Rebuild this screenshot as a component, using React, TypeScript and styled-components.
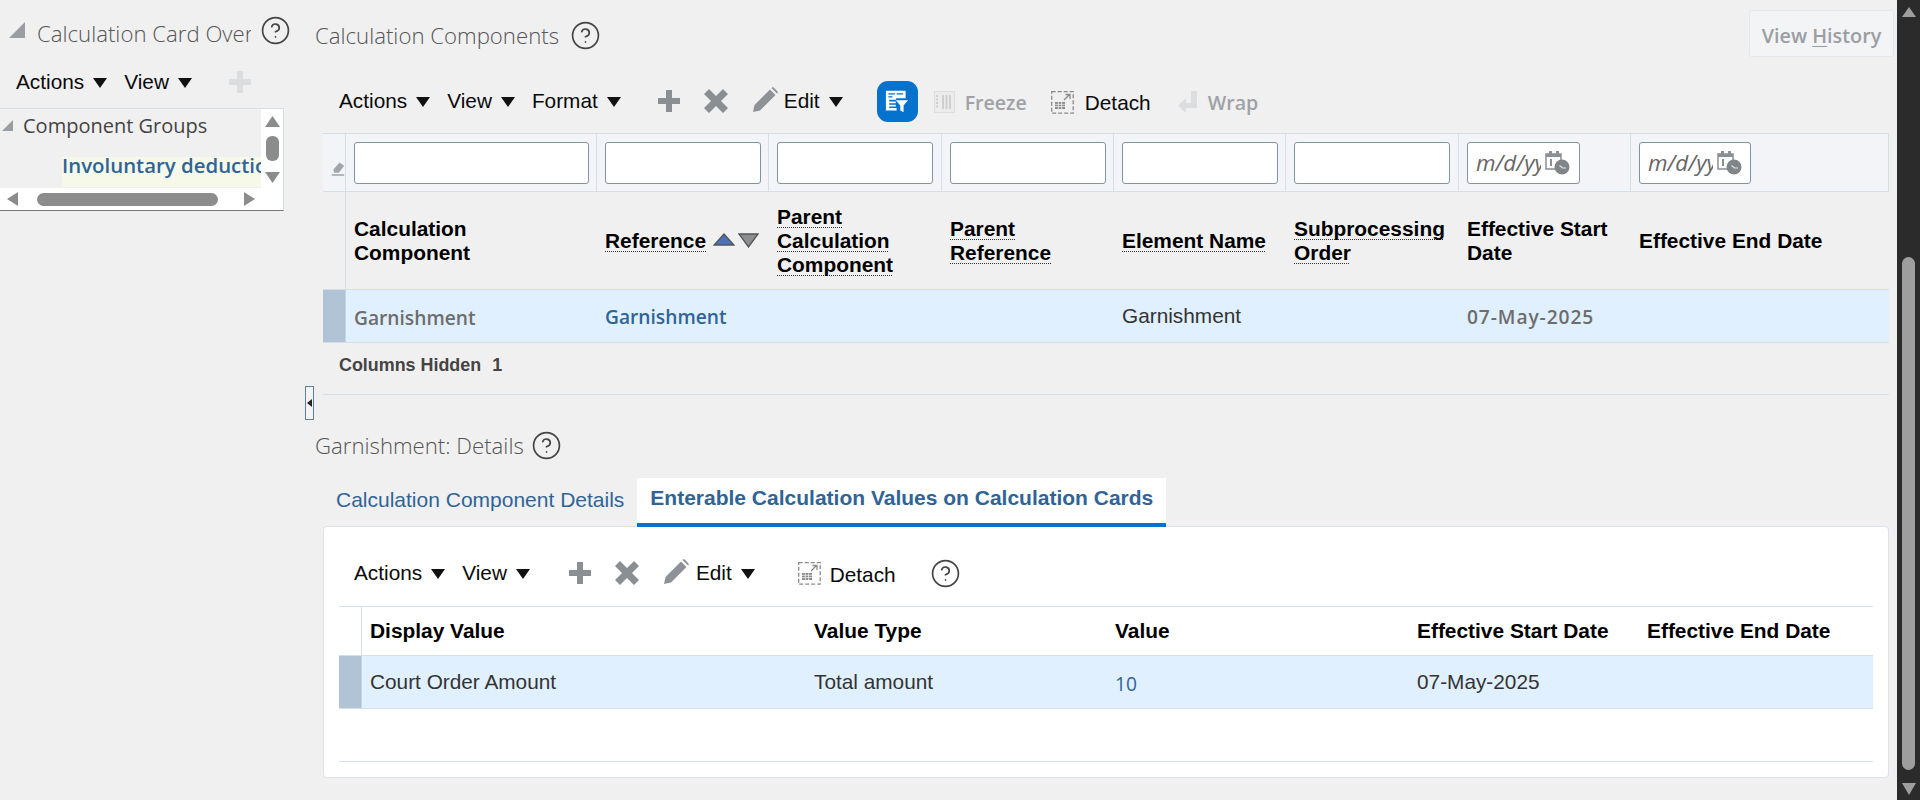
import React from 'react';
import styled, { createGlobalStyle } from 'styled-components';
import { CircleHelp } from 'lucide-react';

const GlobalStyle = createGlobalStyle`
  html, body { margin: 0; padding: 0; background: #f0f0f1; }
  body { font-family: "Liberation Sans", Arial, sans-serif; color: #333; overflow: hidden; }
  * { box-sizing: border-box; }
`;

const MAIN_COLS = '23px 251px 172px 173px 172px 172px 173px 172px 258px';
const SUB_COLS = '23px 444px 301px 302px 230px 234px';

// --- page frame ---
const Page = styled.div`
  position: relative;
  display: flex;
  width: 1920px;
  height: 800px;
  overflow: hidden;
`;

const LeftPane = styled.aside`
  width: 305px;
  flex: none;
`;

const MainPane = styled.main`
  width: 1592px;
  flex: none;
  padding-left: 10px;
`;

const PageScroll = styled.div`
  width: 23px;
  flex: none;
  background: #2b2b2b;
  display: flex;
  flex-direction: column;
  align-items: center;
  padding: 7px 0 5px;
`;

const PageThumb = styled.div`
  width: 13px;
  height: 513px;
  margin-top: 240px;
  background: #9e9e9e;
  border-radius: 7px;
`;

const BottomArrow = styled.div`
  margin-top: auto;
  display: flex;
`;

const SplitterTab = styled.div`
  position: absolute;
  left: 305px;
  top: 386px;
  width: 9px;
  height: 34px;
  border: 1px solid #5f7f98;
  background: #f4f4f4;
  display: flex;
  align-items: center;
  justify-content: center;
`;

// --- left pane ---
const LeftTitleRow = styled.div`
  height: 60px;
  padding-left: 9px;
  display: flex;
  align-items: center;
`;

const SectionTitle = styled.h2<{ $width?: number }>`
  margin: 0;
  font-family: "Open Sans", sans-serif;
  font-weight: 300;
  font-size: 22.2px;
  color: #555;
  white-space: nowrap;
  overflow: hidden;
  ${p => (p.$width ? `width: ${p.$width}px;` : '')}
`;

const HelpIcon = styled(CircleHelp)<{ $ml: number }>`
  margin-left: ${p => p.$ml}px;
  width: 31px;
  height: 31px;
  color: #444;
  flex: none;
`;

const LeftBar = styled.div`
  height: 48px;
  padding: 0 0 4px 16px;
  display: flex;
  align-items: center;
`;

const Tree = styled.div`
  width: 284px;
  height: 103px;
  border-top: 1px solid #d6dfe6;
  border-right: 1px solid #d6dfe6;
  border-bottom: 1px solid #777;
  display: grid;
  grid-template-columns: 261px 22px;
  grid-template-rows: 79px 22px;
`;

const TreeBody = styled.div`
  overflow: hidden;
  white-space: nowrap;
  font-family: "Open Sans", sans-serif;
`;

const TreeRoot = styled.div`
  height: 32px;
  margin-bottom: 16px;
  padding-left: 2px;
  display: flex;
  align-items: center;
  font-size: 20px;
  color: #444;
  gap: 10px;
`;

const TreeLeaf = styled.div`
  margin-left: 62px;
  height: 30px;
  line-height: 17px;
  background: #f6f8e9;
  color: #2f6497;
  font-weight: 600;
  font-size: 20.4px;
  overflow: hidden;
`;

const TreeVScroll = styled.div`
  background: #fff;
  display: flex;
  flex-direction: column;
  align-items: center;
  padding-top: 7px;
`;

const TreeVThumb = styled.div`
  width: 13px;
  height: 25px;
  margin: 9px 0 11px;
  border-radius: 6px;
  background: #8c8c8c;
`;

const TreeHScroll = styled.div`
  grid-column: 1 / 3;
  background: #fff;
  display: flex;
  align-items: center;
  padding-left: 7px;
`;

const TreeHThumb = styled.div`
  width: 181px;
  height: 13px;
  margin: 0 26px 0 19px;
  border-radius: 7px;
  background: #8c8c8c;
`;

// --- headings and toolbars ---
const HeadRow = styled.div`
  height: 62px;
  padding-top: 10px;
  display: flex;
  align-items: flex-start;
  justify-content: space-between;
`;

const HeadTitle = styled.div`
  display: flex;
  align-items: center;
  height: 50px;
`;

const HistoryButton = styled.div`
  width: 145px;
  height: 47px;
  margin-right: 3px;
  padding-top: 4px;
  border: 1px solid #e3e7ec;
  border-radius: 3px;
  background: #f3f4f6;
  display: flex;
  align-items: center;
  justify-content: center;
  font-family: "Open Sans", sans-serif;
  font-weight: 600;
  font-size: 19.8px;
  color: #9a9ea3;
  u { text-underline-offset: 3px; }
`;

const Toolbar = styled.div<{ $h: number; $pt: number; $pl: number }>`
  height: ${p => p.$h}px;
  padding: ${p => p.$pt}px 0 0 ${p => p.$pl}px;
  display: flex;
  align-items: center;
`;

const Tool = styled.span<{ $ml?: number; $dy?: number }>`
  display: inline-flex;
  align-items: center;
  flex: none;
  margin-left: ${p => p.$ml || 0}px;
  ${p => (p.$dy ? `transform: translateY(${p.$dy}px);` : '')}
`;

const ToolText = styled.span`
  font-size: 20.8px;
  color: #0a0a0a;
  white-space: nowrap;
`;

const MutedText = styled.span`
  font-family: "Open Sans", sans-serif;
  font-weight: 600;
  font-size: 19.6px;
  color: #9fa2a5;
  white-space: nowrap;
`;

const BlueButton = styled.div`
  width: 41px;
  height: 41px;
  border-radius: 11px;
  background: #0572ce;
  display: flex;
  align-items: center;
  justify-content: center;
`;

// --- main table ---
const TableArea = styled.div`
  margin-left: 8px;
  width: 1566px;
`;

const FilterRow = styled.div`
  display: grid;
  grid-template-columns: ${MAIN_COLS};
  height: 59px;
  background: #f2f4f8;
  border: 1px solid #d6dfe6;
  border-width: 1px 1px 1px 0;
`;

const FilterCell = styled.div`
  border-right: 1px solid #d6dfe6;
  padding-left: 8px;
  display: flex;
  align-items: center;
  &:last-child { border-right: 0; }
`;

const EraserCell = styled(FilterCell)`
  padding: 10px 0 0 8px;
  overflow: hidden;
`;

const FilterBox = styled.div<{ $w: number }>`
  width: ${p => p.$w}px;
  height: 42px;
  background: #fff;
  border: 1px solid #7f95a6;
  border-radius: 3px;
  display: flex;
  align-items: center;
  padding-left: 8px;
  overflow: hidden;
`;

const DateHint = styled.span`
  width: 65px;
  margin-right: 4px;
  flex: none;
  overflow: hidden;
  font-family: "Open Sans", sans-serif;
  font-style: italic;
  font-size: 22.4px;
  color: #666;
  white-space: nowrap;
`;

const HeaderRow = styled.div<{ $cols: string; $h: number }>`
  display: grid;
  grid-template-columns: ${p => p.$cols};
  height: ${p => p.$h}px;
`;

const GripCell = styled.div`
  border-right: 1px solid #d6dfe6;
`;

const HeaderCell = styled.div`
  padding: 0 8px;
  display: flex;
  align-items: center;
  font-weight: 700;
  font-size: 20.9px;
  line-height: 24px;
  color: #000;
`;

const Dotted = styled.span`
  text-decoration: underline dotted 1px #333;
  text-underline-offset: 3px;
  text-decoration-skip-ink: none;
`;

const DataRow = styled.div<{ $cols: string }>`
  display: grid;
  grid-template-columns: ${p => p.$cols};
  height: 54px;
  background: #e1f0fe;
  border-top: 1px solid #d6dfe6;
  border-bottom: 1px solid #d6dfe6;
`;

const Selector = styled.div`
  background: #b0c4d6;
  border-right: 1px solid #c6d4e0;
`;

const cellKinds = {
  muted: 'font-family: "Open Sans", sans-serif; font-weight: 600; font-size: 19.2px; color: #6d6d6d; padding-top: 2px;',
  date: 'font-family: "Open Sans", sans-serif; font-weight: 600; font-size: 19.2px; letter-spacing: 0.9px; color: #6d6d6d;',
  link: 'font-family: "Open Sans", sans-serif; font-weight: 600; font-size: 19.2px; color: #2f6497;',
  number: 'font-family: "Open Sans", sans-serif; font-size: 19.2px; color: #2f6497; padding-top: 3px;',
  plain: 'font-size: 20.8px; color: #333;',
};

const DataCell = styled.div<{ $kind?: keyof typeof cellKinds }>`
  padding: 0 8px;
  display: flex;
  align-items: center;
  white-space: nowrap;
  ${p => cellKinds[p.$kind || 'plain']}
`;

const HiddenNote = styled.div`
  height: 52px;
  border-bottom: 1px solid #d6dfe6;
  padding: 0 0 6px 16px;
  display: flex;
  align-items: center;
  gap: 11px;
  font-weight: 700;
  font-size: 17.9px;
  color: #444;
`;

// --- details ---
const DetailHead = styled.div`
  height: 83px;
  padding-top: 18px;
  display: flex;
  align-items: center;
`;

const Tabs = styled.div`
  height: 49px;
  padding-left: 13px;
  display: flex;
  align-items: stretch;
  gap: 13px;
`;

const Tab = styled.div<{ $active?: boolean }>`
  display: flex;
  align-items: center;
  padding: ${p => (p.$active ? '0 13px 5px' : '0 0 5px')};
  font-size: 21px;
  color: #2f6497;
  white-space: nowrap;
  ${p => (p.$active ? 'background: #fff; font-weight: 700; border-bottom: 4px solid #0572ce;' : '')}
`;

const DetailPanel = styled.section`
  height: 252px;
  margin-top: -1px;
  background: #fff;
  border: 1px solid #dde3e8;
  border-radius: 4px;
  padding: 0 15px;
`;

const SubTable = styled.div`
  border-top: 1px solid #d6dfe6;
  border-bottom: 1px solid #d6dfe6;
  height: 156px;
`;

const caret = (
  <svg width="14" height="10" viewBox="0 0 14 10">
    <polygon points="0,0 14,0 7,10" fill="#111" />
  </svg>
);

const Menu = ({ label, ml }: { label: string; ml?: number }) => (
  <Tool $ml={ml}>
    <ToolText>{label}</ToolText>
    <Tool $ml={9} $dy={1}>{caret}</Tool>
  </Tool>
);

const PlusIcon = ({ color = '#8a8f93' }: { color?: string }) => (
  <svg width="22" height="22" viewBox="0 0 22 22">
    <path d="M8 0h6v8h8v6h-8v8H8v-8H0V8h8z" fill={color} />
  </svg>
);

const CloseIcon = () => (
  <svg width="24" height="24" viewBox="0 0 24 24">
    <path d="M0 5l5-5 7 7 7-7 5 5-7 7 7 7-5 5-7-7-7 7-5-5 7-7z" fill="#8a8f93" />
  </svg>
);

const PencilIcon = () => (
  <svg width="25" height="25" viewBox="0 0 25 25">
    <path d="M0 25l1.500-7L17 2.500 22.500 8 7 23.500zM18.500 1l1-1c1 0 4.500 3.500 5.500 5.500l-1 1z" fill="#8e9296" />
  </svg>
);

const FilterIcon = () => (
  <svg width="24" height="23" viewBox="0 0 29 28">
    <path d="M1 1h24v9H14l-1 2H5v2h8v2H5v2h8v2H5v2h9v3H1z" fill="#fff" />
    <path d="M4 4h8v1.500H4zM14 4h8v1.500h-8zM4 7.500h5V9H4z" fill="#0572ce" />
    <path d="M13 12.500h15l-5.500 6.500v8l-4-2v-6z" fill="#fff" />
  </svg>
);

const FreezeIcon = () => (
  <svg width="21" height="22" viewBox="0 0 21 22">
    <rect x="0.500" y="0.500" width="20" height="21" fill="#ececec" stroke="#dedede" />
    <path d="M3 4v14" stroke="#cfcfcf" strokeWidth="2" strokeDasharray="2 1.500" fill="none" />
    <path d="M9 4v14M12.500 4v14M16 4v14" stroke="#cfcfcf" strokeWidth="2" fill="none" />
  </svg>
);

const DetachIcon = () => (
  <svg width="23" height="23" viewBox="0 0 23 23">
    <rect x="0.700" y="0.700" width="21.500" height="21.500" fill="none" stroke="#8a8a8a" strokeWidth="1.300" strokeDasharray="4 2" />
    <path d="M13 9l5-5M14.500 3.500H19V8" fill="none" stroke="#8a8a8a" strokeWidth="1.300" />
    <path d="M4 11h10v7H4z" fill="#8a8a8a" />
    <path d="M4 13.300h10M4 15.600h10M7.300 11v7M10.600 11v7" stroke="#f3f3f3" strokeWidth="0.800" />
  </svg>
);

const WrapIcon = () => (
  <svg width="19" height="22" viewBox="0 0 19 22">
    <path d="M13 0h6v17H8v5L0 14.500 8 7v5h5z" fill="#dcdddf" />
  </svg>
);

const EraserIcon = () => (
  <svg width="18" height="24" viewBox="0 0 18 24">
    <path d="M3 14l8-9 6 4-7 9H4z" fill="#a2a6aa" />
    <path d="M1 20h16v2H1z" fill="#a2a6aa" />
  </svg>
);

const CalendarClock = () => (
  <svg width="26" height="24" viewBox="0 0 26 24">
    <path d="M4 0h3v4H4zM11 0h3v4h-3z" fill="#8a8f93" />
    <path d="M1 3h15v15H1z" fill="#fff" stroke="#8a8f93" strokeWidth="1.500" />
    <path d="M1 3h15v3H1z" fill="#8a8f93" />
    <path d="M5 8h2v7H5z" fill="#8a8f93" />
    <circle cx="17" cy="16" r="7.500" fill="#7f8589" />
    <path d="M14.500 14.500l3 2.500h3.500" stroke="#e8e8e8" strokeWidth="1.100" fill="none" />
  </svg>
);

const SortIcons = () => (
  <Tool $ml={7}>
    <svg width="22" height="15" viewBox="0 0 22 15">
      <polygon points="11,1 21,12 1,12" fill="#4a72b8" stroke="#555" strokeWidth="1.300" />
    </svg>
    <Tool $ml={3}>
      <svg width="21" height="15" viewBox="0 0 21 15">
        <polygon points="1,1 20,1 10.500,14" fill="#8c8f92" stroke="#555" strokeWidth="1.300" />
      </svg>
    </Tool>
  </Tool>
);

const Tri = ({ dir, w, h, color = '#8c8c8c' }: { dir: 'up' | 'down' | 'left' | 'right'; w: number; h: number; color?: string }) => {
  const pts = {
    up: '50,0 100,100 0,100',
    down: '0,0 100,0 50,100',
    left: '100,0 100,100 0,50',
    right: '0,0 0,100 100,50',
  }[dir];
  return (
    <svg width={w} height={h} viewBox="0 0 100 100" preserveAspectRatio="none">
      <polygon points={pts} fill={color} />
    </svg>
  );
};

const Corner = ({ size, color }: { size: number; color: string }) => (
  <svg width={size} height={size} viewBox="0 0 16 16">
    <polygon points="16,0 16,16 0,16" fill={color} />
  </svg>
);

const filterWidths = [235, 156, 156, 156, 156, 156];

const App = () => {
  return (
    <Page>
      <GlobalStyle />
      <LeftPane>
        <LeftTitleRow>
          <Corner size={16} color="#9a9ea2" />
          <Tool $ml={12} $dy={3}>
            <SectionTitle $width={214}>Calculation Card Overview</SectionTitle>
          </Tool>
          <HelpIcon $ml={9} strokeWidth={1.3} />
        </LeftTitleRow>
        <LeftBar>
          <Menu label="Actions" />
          <Menu label="View" ml={17} />
          <Tool $ml={37}><PlusIcon color="#dcdddf" /></Tool>
        </LeftBar>
        <Tree>
          <TreeBody>
            <TreeRoot>
              <Corner size={11} color="#9a9ea2" />
              Component Groups
            </TreeRoot>
            <TreeLeaf>Involuntary deductions</TreeLeaf>
          </TreeBody>
          <TreeVScroll>
            <Tri dir="up" w={15} h={11} />
            <TreeVThumb />
            <Tri dir="down" w={15} h={11} />
          </TreeVScroll>
          <TreeHScroll>
            <Tri dir="left" w={11} h={14} />
            <TreeHThumb />
            <Tri dir="right" w={11} h={14} />
          </TreeHScroll>
        </Tree>
      </LeftPane>

      <MainPane>
        <HeadRow>
          <HeadTitle>
            <SectionTitle>Calculation Components</SectionTitle>
            <HelpIcon $ml={11} strokeWidth={1.3} />
          </HeadTitle>
          <HistoryButton><span>View <u>H</u>istory</span></HistoryButton>
        </HeadRow>

        <TableArea>
          <Toolbar $h={71} $pt={7} $pl={16}>
            <Menu label="Actions" />
            <Menu label="View" ml={17} />
            <Menu label="Format" ml={17} />
            <Tool $ml={37}><PlusIcon /></Tool>
            <Tool $ml={24}><CloseIcon /></Tool>
            <Tool $ml={25} $dy={-2}><PencilIcon /></Tool>
            <Tool $ml={6}><Menu label="Edit" /></Tool>
            <Tool $ml={34}><BlueButton><FilterIcon /></BlueButton></Tool>
            <Tool $ml={16} $dy={1}><FreezeIcon /></Tool>
            <Tool $ml={10} $dy={1}><MutedText>Freeze</MutedText></Tool>
            <Tool $ml={24} $dy={1}><DetachIcon /></Tool>
            <Tool $ml={11} $dy={2}><ToolText>Detach</ToolText></Tool>
            <Tool $ml={27} $dy={1}><WrapIcon /></Tool>
            <Tool $ml={11} $dy={1}><MutedText>Wrap</MutedText></Tool>
          </Toolbar>

          <FilterRow>
            <EraserCell><EraserIcon /></EraserCell>
            {filterWidths.map((w, i) => (
              <FilterCell key={i}><FilterBox $w={w} /></FilterCell>
            ))}
            <FilterCell>
              <FilterBox $w={113}><DateHint>m/d/yy</DateHint><CalendarClock /></FilterBox>
            </FilterCell>
            <FilterCell>
              <FilterBox $w={112}><DateHint>m/d/yy</DateHint><CalendarClock /></FilterBox>
            </FilterCell>
          </FilterRow>

          <HeaderRow $cols={MAIN_COLS} $h={97}>
            <GripCell />
            <HeaderCell><span>Calculation<br />Component</span></HeaderCell>
            <HeaderCell><Dotted>Reference</Dotted><SortIcons /></HeaderCell>
            <HeaderCell><Dotted>Parent Calculation Component</Dotted></HeaderCell>
            <HeaderCell><Dotted>Parent Reference</Dotted></HeaderCell>
            <HeaderCell><Dotted>Element Name</Dotted></HeaderCell>
            <HeaderCell><Dotted>Subprocessing Order</Dotted></HeaderCell>
            <HeaderCell><span>Effective Start Date</span></HeaderCell>
            <HeaderCell><span>Effective End Date</span></HeaderCell>
          </HeaderRow>

          <DataRow $cols={MAIN_COLS}>
            <Selector />
            <DataCell $kind="muted">Garnishment</DataCell>
            <DataCell $kind="link">Garnishment</DataCell>
            <DataCell />
            <DataCell />
            <DataCell>Garnishment</DataCell>
            <DataCell />
            <DataCell $kind="date">07-May-2025</DataCell>
            <DataCell />
          </DataRow>

          <HiddenNote><span>Columns Hidden</span><span>1</span></HiddenNote>
        </TableArea>

        <DetailHead>
          <SectionTitle>Garnishment: Details</SectionTitle>
          <HelpIcon $ml={7} strokeWidth={1.3} />
        </DetailHead>

        <TableArea>
          <Tabs>
            <Tab>Calculation Component Details</Tab>
            <Tab $active>Enterable Calculation Values on Calculation Cards</Tab>
          </Tabs>
          <DetailPanel>
            <Toolbar $h={79} $pt={13} $pl={0}>
              <Menu label="Actions" ml={15} />
              <Menu label="View" ml={17} />
              <Tool $ml={39}><PlusIcon /></Tool>
              <Tool $ml={24}><CloseIcon /></Tool>
              <Tool $ml={25} $dy={-2}><PencilIcon /></Tool>
              <Tool $ml={7}><Menu label="Edit" /></Tool>
              <Tool $ml={43}><DetachIcon /></Tool>
              <Tool $ml={9} $dy={2}><ToolText>Detach</ToolText></Tool>
              <HelpIcon $ml={34} strokeWidth={1.3} />
            </Toolbar>
            <SubTable>
              <HeaderRow $cols={SUB_COLS} $h={48}>
                <GripCell />
                <HeaderCell>Display Value</HeaderCell>
                <HeaderCell>Value Type</HeaderCell>
                <HeaderCell>Value</HeaderCell>
                <HeaderCell>Effective Start Date</HeaderCell>
                <HeaderCell>Effective End Date</HeaderCell>
              </HeaderRow>
              <DataRow $cols={SUB_COLS}>
                <Selector />
                <DataCell>Court Order Amount</DataCell>
                <DataCell>Total amount</DataCell>
                <DataCell $kind="number">10</DataCell>
                <DataCell>07-May-2025</DataCell>
                <DataCell />
              </DataRow>
            </SubTable>
          </DetailPanel>
        </TableArea>
      </MainPane>

      <PageScroll>
        <Tri dir="up" w={14} h={10} color="#9e9e9e" />
        <PageThumb />
        <BottomArrow><Tri dir="down" w={14} h={12} color="#9e9e9e" /></BottomArrow>
      </PageScroll>

      <SplitterTab>
        <svg width="5" height="8" viewBox="0 0 5 8"><polygon points="5,0 5,8 0,4" fill="#222" /></svg>
      </SplitterTab>
    </Page>
  );
};

export default App;
